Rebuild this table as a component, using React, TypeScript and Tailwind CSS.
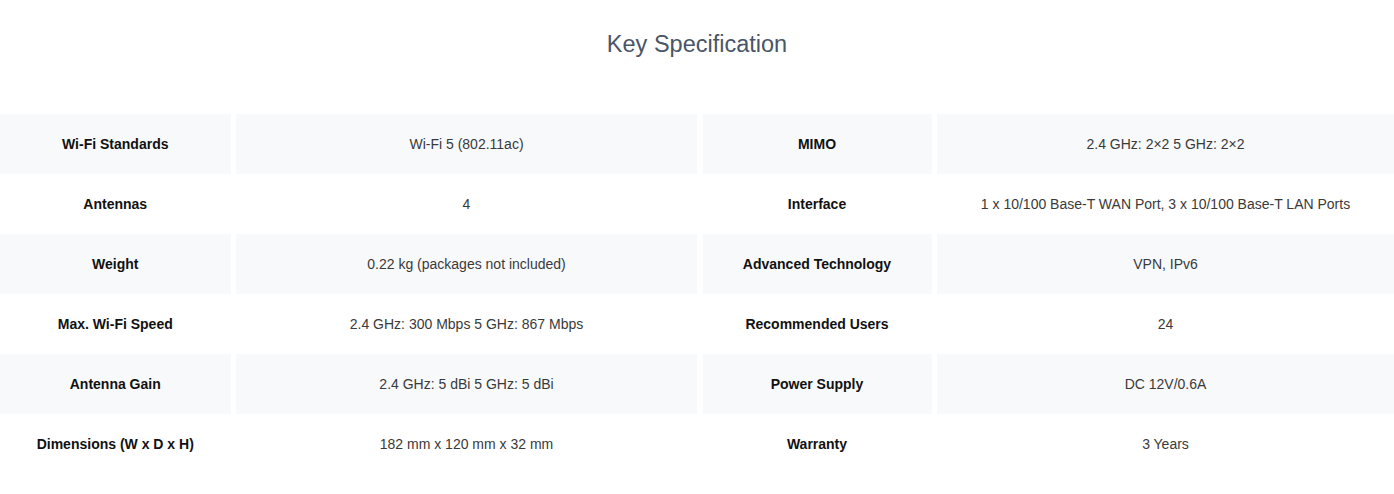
import React from "react";

const rows: [string, string, string, string][] = [
  ["Wi-Fi Standards", "Wi-Fi 5 (802.11ac)", "MIMO", "2.4 GHz: 2×2 5 GHz: 2×2"],
  ["Antennas", "4", "Interface", "1 x 10/100 Base-T WAN Port, 3 x 10/100 Base-T LAN Ports"],
  ["Weight", "0.22 kg (packages not included)", "Advanced Technology", "VPN, IPv6"],
  ["Max. Wi-Fi Speed", "2.4 GHz: 300 Mbps 5 GHz: 867 Mbps", "Recommended Users", "24"],
  ["Antenna Gain", "2.4 GHz: 5 dBi 5 GHz: 5 dBi", "Power Supply", "DC 12V/0.6A"],
  ["Dimensions (W x D x H)", "182 mm x 120 mm x 32 mm", "Warranty", "3 Years"],
];

export default function App() {
  return (
    <div className="w-[1394px] h-[494px] bg-white font-['Liberation_Sans',Arial,sans-serif] overflow-hidden">
      <h2 className="pt-[29px] h-[114px] text-center text-[23.5px] leading-[30px] text-[#4a5568]">
        Key Specification
      </h2>
      <div className="grid grid-cols-[230.5px_461px_229px_1fr] gap-x-[5.5px]">
        {rows.map((r, i) => {
          const bg = i % 2 === 0 ? "bg-[#f8f9fa]" : "bg-white";
          return (
            <React.Fragment key={i}>
              <div className={`${bg} h-[60px] flex items-center justify-center text-[14px] font-bold text-[#111]`}>{r[0]}</div>
              <div className={`${bg} h-[60px] flex items-center justify-center text-[14px] text-[#3a3a3a]`}>{r[1]}</div>
              <div className={`${bg} h-[60px] flex items-center justify-center text-[14px] font-bold text-[#111]`}>{r[2]}</div>
              <div className={`${bg} h-[60px] flex items-center justify-center text-[14px] text-[#3a3a3a]`}>{r[3]}</div>
            </React.Fragment>
          );
        })}
      </div>
    </div>
  );
}
